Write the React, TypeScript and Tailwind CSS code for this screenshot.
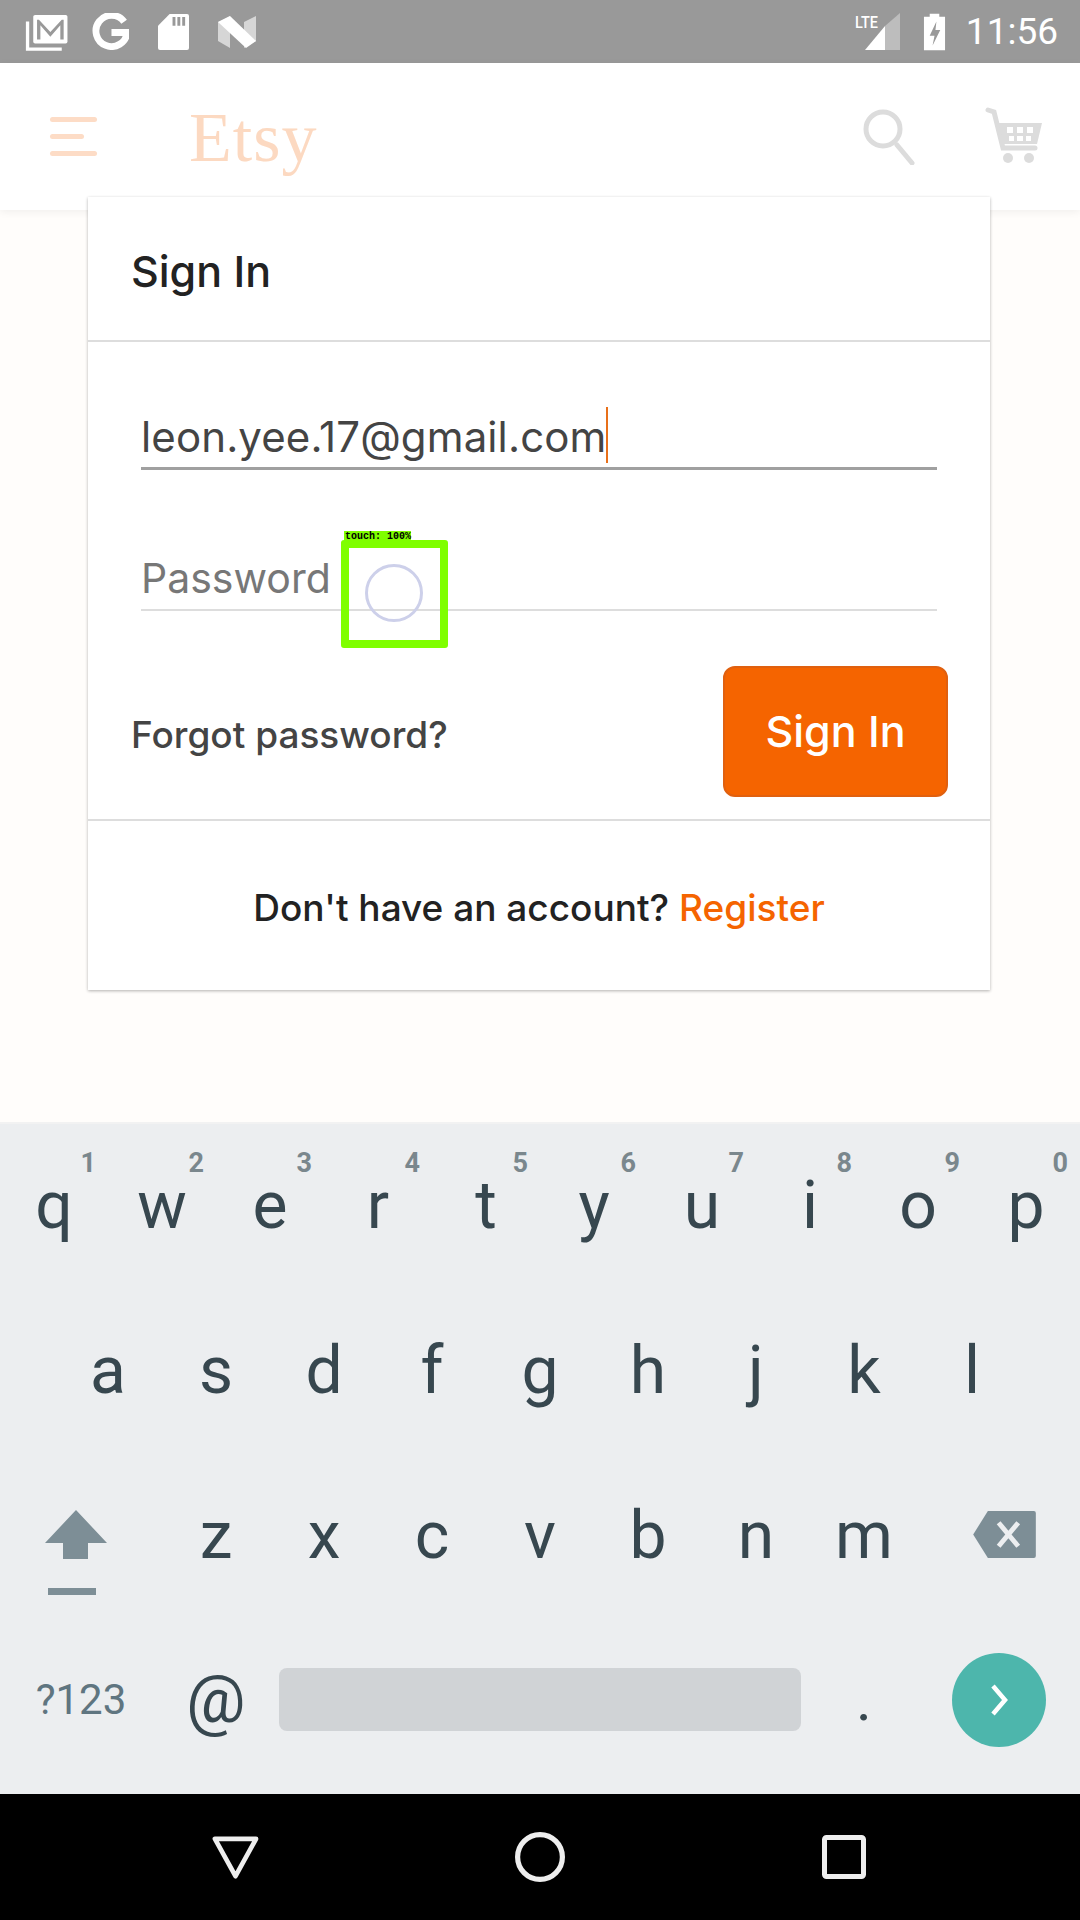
const rowOne = [
  ["q", "1"],
  ["w", "2"],
  ["e", "3"],
  ["r", "4"],
  ["t", "5"],
  ["y", "6"],
  ["u", "7"],
  ["i", "8"],
  ["o", "9"],
  ["p", "0"],
];
const rowTwo = ["a", "s", "d", "f", "g", "h", "j", "k", "l"];
const rowThree = ["z", "x", "c", "v", "b", "n", "m"];

function StatusBar() {
  return (
    <div className="flex h-[63px] shrink-0 items-center justify-between bg-[#999999] pl-[25px] pr-[22px]">
      <div className="flex items-center">
        <svg width="45" height="38" viewBox="0 0 46 40" fill="none">
          <path d="M2 9v29h36" stroke="#fff" strokeWidth="3.5" />
          <rect x="8" y="2" width="36" height="30" rx="2" fill="#fff" />
          <path d="M12 28V7h2l12 13L38 7h2v21h-3.5V13L26 25 15.5 13v15z" fill="#999" />
        </svg>
        <svg width="37" height="37" viewBox="0 0 38 38" fill="none" className="ml-[22px]">
          <path d="M33 9A16 16 0 1 0 36 20H20" stroke="#fff" strokeWidth="7" />
        </svg>
        <svg width="31" height="37" viewBox="0 0 32 38" className="ml-[29px]">
          <path d="M12 1h18a2 2 0 0 1 2 2v33a2 2 0 0 1-2 2H2a2 2 0 0 1-2-2V13z" fill="#fff" />
          <path d="M15 4h3v9h-3zM20 4h3v9h-3zM25 4h3v9h-3z" fill="#999" />
        </svg>
        <svg width="38" height="32" viewBox="0 0 38 32" className="ml-[29px]">
          <path d="M0 6l12-6v32L0 25z" fill="#d6d6d6" />
          <path d="M26 6l12-6v25l-12 7z" fill="#d6d6d6" />
          <path d="M12 0l26 25-10 7L0 6z" fill="#fff" />
        </svg>
      </div>
      <div className="flex items-center">
        <svg width="45" height="37" viewBox="0 0 45 37">
          <path d="M45 0v37H30V13z" fill="#bdbdbd" />
          <path d="M30 13v24H10z" fill="#fff" />
          <text x="0" y="15" fill="#fff" fontSize="17" fontFamily="Roboto, sans-serif" fontWeight="500" textLength="23" lengthAdjust="spacingAndGlyphs">LTE</text>
        </svg>
        <svg width="23" height="38" viewBox="0 0 24 38" className="ml-[23px]">
          <path d="M7 0h10v3h6v35H1V3h6z" fill="#fff" />
          <path d="M14 8l-7 15h5l-2 10 8-16h-5z" fill="#999" />
        </svg>
        <span className="ml-[20px] font-['Roboto',sans-serif] text-[37px] leading-none text-white">11:56</span>
      </div>
    </div>
  );
}

function AppBar() {
  return (
    <div className="flex h-[147px] shrink-0 items-center bg-white shadow-[0_2px_8px_rgba(0,0,0,0.06)]">
      <div className="ml-[50px] flex w-[47px] flex-col gap-[12px]">
        <div className="h-[5px] rounded-full bg-[#fddcc6]" />
        <div className="h-[5px] w-[34px] rounded-full bg-[#fddcc6]" />
        <div className="h-[5px] rounded-full bg-[#fddcc6]" />
      </div>
      <span className="ml-[92px] mt-[2px] font-['Liberation_Serif',serif] text-[70px] leading-none tracking-[1px] text-[#fcd9c1]">Etsy</span>
      <div className="ml-auto mr-[37px] flex items-center gap-[68px]">
        <svg width="54" height="56" viewBox="0 0 54 56" fill="none" stroke="#dcdcdc">
          <circle cx="20" cy="20" r="17" strokeWidth="5" />
          <path d="M34 36l15 18" strokeWidth="5" strokeLinecap="round" />
        </svg>
        <svg width="58" height="58" viewBox="0 0 58 58" fill="none" className="-mt-[4px]">
          <path d="M3 4l6 2 9 36h32" stroke="#dcdcdc" strokeWidth="5" strokeLinecap="round" />
          <path d="M13 17h44l-5 21H19z" fill="#dcdcdc" />
          <path d="M22 21h6v6h-6zM32 21h6v6h-6zM42 21h6v6h-6zM24 30h5v5h-5zM32 30h6v5h-6zM41 30h5v5h-5z" fill="#fff" />
          <circle cx="23" cy="52" r="5" fill="#dcdcdc" />
          <circle cx="44" cy="52" r="5" fill="#dcdcdc" />
        </svg>
      </div>
    </div>
  );
}

function SignInCard() {
  return (
    <div className="relative z-10 mx-[88px] -mt-[13px] w-[902px] bg-white font-['Inter',sans-serif] shadow-[0_1px_3px_rgba(0,0,0,0.3)]">
      <div className="flex h-[145px] items-center border-b-2 border-[#dddddd] pl-[43px] pt-[6px]">
        <h1 className="text-[43px] font-medium leading-none text-[#222222]">Sign In</h1>
      </div>
      <div className="relative border-b-2 border-[#dddddd] px-[53px] pt-[50px]">
        <div className="flex h-[78px] items-end border-b-[3px] border-[#a0a0a0]">
          <span className="mb-[9px] text-[42px] leading-none tracking-[0.12px] text-[#444444]">leon.yee.17@gmail.com</span>
          <span className="mb-[4px] h-[56px] w-[2px] bg-[#e8701a]" />
        </div>
        <div className="mt-[63px] flex h-[78px] items-end border-b-2 border-[#dddddd]">
          <span className="mb-[10px] text-[41px] leading-none text-[#777777]">Password</span>
        </div>
        <div className="mt-[55px] flex items-center justify-between pb-[22px]">
          <a className="-ml-[10px] mt-[6px] text-[37px] font-medium leading-none text-[#444444]">Forgot password?</a>
          <button className="-mr-[11px] flex h-[131px] w-[225px] items-center justify-center rounded-[12px] border-2 border-[#e0600f] bg-[#f56400] text-[43px] font-medium text-white">
            Sign In
          </button>
        </div>
        <div className="absolute left-[253px] top-[198px] h-[108px] w-[107px] rounded-[3px] border-[8px] border-[#7fff00]">
          <span className="absolute -left-[5px] -top-[17px] flex h-[11px] w-[67px] items-center bg-[#7fff00] pl-[1px] font-['Liberation_Mono',monospace] text-[10px] font-bold leading-none text-black">touch: 100%</span>
          <div className="absolute left-[16px] top-[16px] h-[58px] w-[58px] rounded-full border-[3px] border-[#cdd0ea] blur-[0.5px]" />
        </div>
      </div>
      <div className="flex h-[169px] items-center justify-center pt-[4px] text-[37px] font-medium">
        <span className="text-[#222222]">Don't have an account?</span>
        <a className="ml-[10px] text-[#f56400]">Register</a>
      </div>
    </div>
  );
}

function Key({ label, hint }: { label: string; hint?: string }) {
  return (
    <div className="relative flex h-full w-[108px] items-center justify-center text-[66px] leading-none text-[#37474f]">
      {hint && <span className="absolute right-[12px] top-[24px] text-[27px] font-bold leading-none text-[#7a878d]">{hint}</span>}
      <span className="-mt-[6px]">{label}</span>
    </div>
  );
}

function Keyboard() {
  return (
    <div className="grid h-[672px] shrink-0 auto-rows-[165px] border-t-2 border-[#f2f2f2] bg-[#eceef0] pt-[2px] font-['Roboto',sans-serif]">
      <div className="flex">
        {rowOne.map(([label, hint]) => (
          <Key key={label} label={label} hint={hint} />
        ))}
      </div>
      <div className="flex justify-center">
        {rowTwo.map((label) => (
          <Key key={label} label={label} />
        ))}
      </div>
      <div className="flex">
        <div className="flex w-[162px] items-center pl-[45px]">
          <svg width="62" height="85" viewBox="0 0 62 85" className="mt-[27px]">
            <path d="M31 0l31 33H43v16H18V33H0z" fill="#7d8e96" />
            <rect x="3" y="78" width="48" height="7" fill="#7d8e96" />
          </svg>
        </div>
        {rowThree.map((label) => (
          <Key key={label} label={label} />
        ))}
        <div className="flex flex-1 items-center pl-[55px]">
          <svg width="63" height="47" viewBox="0 0 64 48" className="-mt-[9px]">
            <path d="M15 0h47a2 2 0 0 1 2 2v44a2 2 0 0 1-2 2H15L0 24z" fill="#7d8e96" />
            <path d="M26 12l20 24M46 12L26 36" stroke="#eceef0" strokeWidth="5" />
          </svg>
        </div>
      </div>
      <div className="flex items-center pb-[8px]">
        <div className="flex w-[162px] justify-center text-[42px] text-[#5f7580]">?123</div>
        <div className="flex w-[108px] justify-center text-[66px] text-[#37474f]">@</div>
        <div className="mx-[9px] h-[63px] w-[522px] rounded-[8px] bg-[#d0d3d6]" />
        <div className="flex w-[108px] justify-center text-[60px] text-[#37474f]">.</div>
        <div className="ml-[34px] flex h-[94px] w-[94px] items-center justify-center rounded-full bg-[#4db6ac]">
          <svg width="20" height="34" viewBox="0 0 20 34" fill="none">
            <path d="M4 3l12 14L4 31" stroke="#fff" strokeWidth="4.5" />
          </svg>
        </div>
      </div>
    </div>
  );
}

function NavBar() {
  return (
    <div className="flex h-[126px] shrink-0 items-center bg-black pl-[211px]">
      <svg width="49" height="43" viewBox="0 0 50 46" fill="none">
        <path d="M3 3h44L25 43z" stroke="#eeeeee" strokeWidth="5" strokeLinejoin="round" />
      </svg>
      <svg width="50" height="50" viewBox="0 0 48 48" fill="none" className="ml-[255px]">
        <circle cx="24" cy="24" r="21.5" stroke="#eeeeee" strokeWidth="5" />
      </svg>
      <svg width="44" height="44" viewBox="0 0 44 44" fill="none" className="ml-[257px]">
        <rect x="2.5" y="2.5" width="39" height="39" rx="2" stroke="#eeeeee" strokeWidth="5" />
      </svg>
    </div>
  );
}

export default function App() {
  return (
    <div className="flex h-[1920px] w-[1080px] flex-col overflow-hidden bg-[#fffdfb]">
      <StatusBar />
      <AppBar />
      <div className="flex-1">
        <SignInCard />
      </div>
      <Keyboard />
      <NavBar />
    </div>
  );
}
